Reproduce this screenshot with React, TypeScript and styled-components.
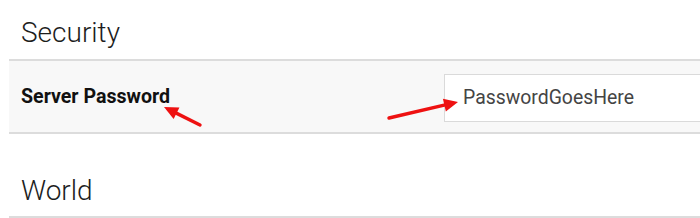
import React from "react";
import styled, { createGlobalStyle } from "styled-components";

const Global = createGlobalStyle`
  html, body { margin: 0; padding: 0; background: #ffffff; overflow: hidden; }
  body { font-family: Roboto, "Liberation Sans", sans-serif; color: #222; }
`;

const Page = styled.div`
  position: relative;
  width: 700px;
  height: 218px;
  overflow: hidden;
`;

const Section = styled.section`
  margin-left: 9px;
`;

const Heading = styled.h2<{ $size: number; $top: number; $bottom: number }>`
  margin: 0;
  padding: ${(p) => p.$top}px 0 ${(p) => p.$bottom}px 12px;
  font-family: Roboto, "Liberation Sans", sans-serif;
  font-weight: 300;
  font-size: ${(p) => p.$size}px;
  line-height: 34px;
  color: #1d1d1d;
  border-bottom: 2px solid #dcdcdc;
`;

const Row = styled.div`
  display: grid;
  grid-template-columns: 435px 1fr;
  align-items: center;
  height: 71px;
  background: #f8f8f8;
  border-bottom: 2px solid #dcdcdc;
`;

const Label = styled.label`
  padding-left: 12px;
  font-family: Roboto, "Liberation Sans", sans-serif;
  font-weight: 700;
  font-size: 19.6px;
  color: #111;
`;

const Input = styled.input`
  box-sizing: border-box;
  width: 400px;
  height: 48px;
  margin-top: 2px;
  padding: 0 0 0 18px;
  border: 1px solid #dadada;
  background: #fff;
  font-family: Roboto, "Liberation Sans", sans-serif;
  font-size: 19.4px;
  color: #444;
  outline: none;
`;

const Arrows = styled.svg`
  position: absolute;
  left: 0;
  top: 0;
  pointer-events: none;
`;

function Arrow({ x1, y1, x2, y2 }: { x1: number; y1: number; x2: number; y2: number }) {
  const dx = x2 - x1;
  const dy = y2 - y1;
  const len = Math.hypot(dx, dy);
  const ux = dx / len;
  const uy = dy / len;
  const hl = 14;
  const hw = 6.5;
  const bx = x2 - ux * hl;
  const by = y2 - uy * hl;
  const pts = `${x2},${y2} ${bx - uy * hw},${by + ux * hw} ${bx + uy * hw},${by - ux * hw}`;
  return (
    <g>
      <line x1={x1} y1={y1} x2={bx + ux * 2} y2={by + uy * 2} stroke="#ee1111" strokeWidth={3.4} strokeLinecap="round" />
      <polygon points={pts} fill="#ee1111" />
    </g>
  );
}

export default function App() {
  return (
    <>
      <Global />
      <Page>
        <Section>
          <Heading $size={28} $top={16} $bottom={9}>Security</Heading>
          <Row>
            <Label>Server Password</Label>
            <Input defaultValue="PasswordGoesHere" />
          </Row>
        </Section>
        <Section>
          <Heading $size={28} $top={40} $bottom={8}>World</Heading>
        </Section>
        <Arrows width={700} height={218} viewBox="0 0 700 218">
          <Arrow x1={200} y1={125} x2={164} y2={107} />
          <Arrow x1={389} y1={118} x2={458} y2={102} />
        </Arrows>
      </Page>
    </>
  );
}
